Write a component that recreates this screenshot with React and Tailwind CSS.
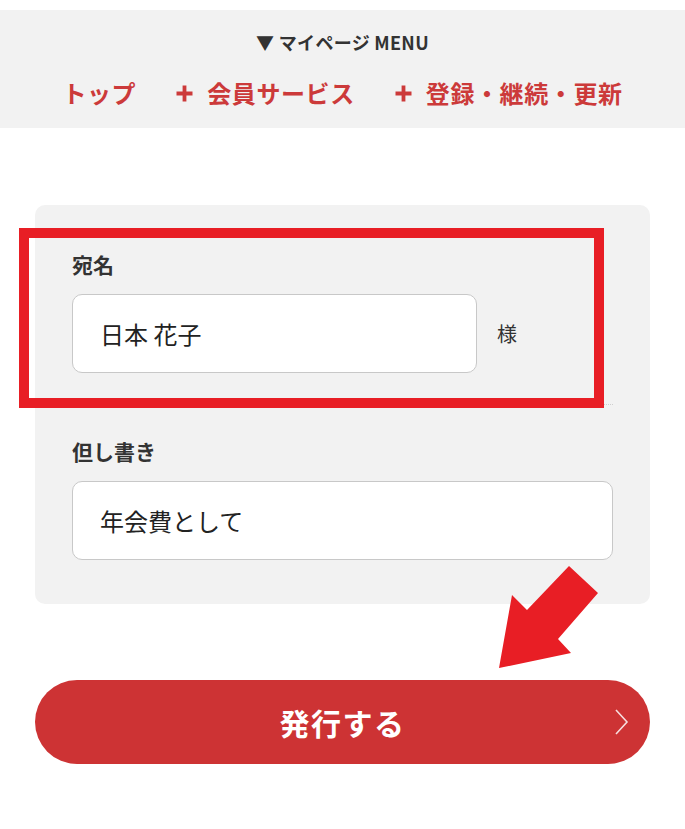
import React from "react";

const font = { fontFamily: '"Noto Sans CJK JP", "Noto Sans", sans-serif' };

function Plus() {
  return (
    <svg width="17" height="17" viewBox="0 0 17 17" className="mr-[14px] shrink-0">
      <path d="M8.5 0.5v16M0.5 8.5h16" stroke="#cc3a3a" strokeWidth="3.8" />
    </svg>
  );
}

export default function App() {
  return (
    <div className="relative w-[685px] min-h-[829px] bg-white" style={font}>
      <div className="pt-[10px]">
        <div className="bg-[#f2f2f2] h-[118px] flex flex-col items-center pt-[20px]">
          <div className="text-[18px] leading-[24px] font-bold text-[#333] tracking-[0.3px]">▼ マイページ MENU</div>
          <div className="mt-[22px] flex items-center gap-[40px] text-[24px] leading-[34px] font-bold text-[#cc3a3a] tracking-[0.6px]">
            <span>トップ</span>
            <span className="flex items-center"><Plus />会員サービス</span>
            <span className="flex items-center"><Plus />登録・継続・更新</span>
          </div>
        </div>
      </div>

      <div className="mx-[35px] mt-[77px] bg-[#f2f2f2] rounded-[10px] px-[37px] pt-[46px] pb-[44px]">
        <div className="border-b border-dotted border-[#cfcfcf] pb-[31px]">
          <div className="text-[21px] leading-[27px] font-bold text-[#333]">宛名</div>
          <div className="mt-[16px] flex items-center">
            <div className="w-[405px] h-[79px] bg-white border border-[#c8c8c8] rounded-[10px] flex items-center pl-[27px] text-[24px] text-[#222]">
              日本 花子
            </div>
            <span className="ml-[20px] text-[20px] text-[#333]">様</span>
          </div>
        </div>
        <div className="pt-[33px]">
          <div className="text-[21px] leading-[27px] font-bold text-[#333]">但し書き</div>
          <div className="mt-[16px] w-[541px] h-[79px] bg-white border border-[#c8c8c8] rounded-[10px] flex items-center pl-[27px] text-[24px] text-[#222]">
            年会費として
          </div>
        </div>
      </div>

      <div className="mx-[35px] mt-[76px] h-[84px] rounded-full bg-[#cd3334] relative flex items-center justify-center">
        <span className="text-white font-bold text-[30px] tracking-[1.5px]">発行する</span>
        <svg className="absolute right-[21px] top-[29px]" width="14" height="26" viewBox="0 0 14 26">
          <polyline points="1,1 12,13 1,25" fill="none" stroke="#f6dede" strokeWidth="1.6" />
        </svg>
      </div>

      <div className="absolute left-[19px] top-[228px] w-[585px] h-[180px] border-[10px] border-[#e81e25] pointer-events-none" />

      <svg className="absolute left-0 top-0 pointer-events-none" width="685" height="829">
        <polygon points="569,566 598,593 558,639 571,653 499,668 512,595 527,610" fill="#e81e25" />
      </svg>
    </div>
  );
}
